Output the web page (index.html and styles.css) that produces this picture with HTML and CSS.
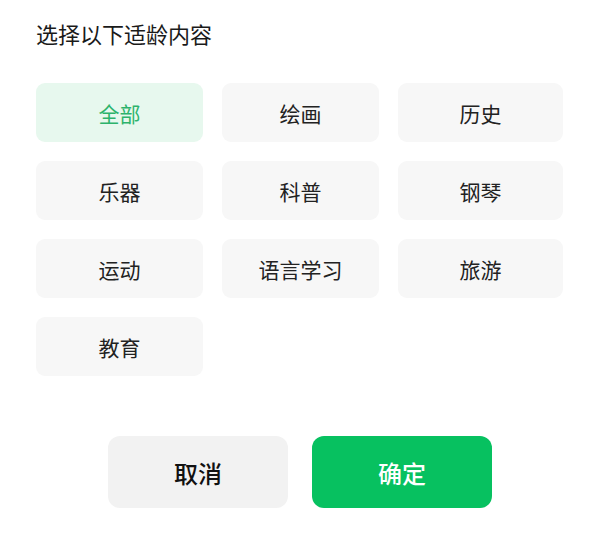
FILE: index.html
```html
<!DOCTYPE html>
<html lang="zh">
<head>
<meta charset="utf-8">
<link rel="stylesheet" href="styles.css">
</head>
<body>
<div class="sheet">
  <h1 class="title">选择以下适龄内容</h1>
  <div class="grid">
    <div class="tile selected">全部</div>
    <div class="tile">绘画</div>
    <div class="tile">历史</div>
    <div class="tile">乐器</div>
    <div class="tile">科普</div>
    <div class="tile">钢琴</div>
    <div class="tile">运动</div>
    <div class="tile">语言学习</div>
    <div class="tile">旅游</div>
    <div class="tile">教育</div>
  </div>
  <div class="actions">
    <button class="btn cancel">取消</button>
    <button class="btn confirm">确定</button>
  </div>
</div>
</body>
</html>
```
FILE: styles.css
```css
html, body {
  margin: 0;
  padding: 0;
  background: #ffffff;
}
body {
  font-family: "Noto Sans CJK SC", "Noto Sans", sans-serif;
  color: #1f1f1f;
}
.sheet {
  width: 600px;
  height: 541px;
  padding: 17px 37px 0 36px;
  box-sizing: border-box;
}
.title {
  margin: 0;
  font-size: 22px;
  font-weight: 400;
  line-height: 32px;
  color: #1a1a1a;
}
.grid {
  margin-top: 34px;
  display: grid;
  grid-template-columns: 167px 157px 165px;
  grid-auto-rows: 59px;
  column-gap: 19px;
  row-gap: 19px;
}
.tile {
  background: #f7f7f7;
  border-radius: 9px;
  display: flex;
  align-items: center;
  justify-content: center;
  font-size: 21px;
  color: #222222;
}
.tile.selected {
  background: #e7f8ee;
  color: #2db36c;
}
.actions {
  margin-top: 60px;
  display: flex;
  justify-content: center;
  gap: 24px;
  padding-left: 1px;
}
.btn {
  width: 180px;
  height: 72px;
  border: none;
  border-radius: 12px;
  font-family: "Noto Sans CJK SC", "Noto Sans", sans-serif;
  font-size: 24px;
  font-weight: 500;
  cursor: pointer;
}
.cancel {
  background: #f2f2f2;
  color: #111111;
}
.confirm {
  background: #07c160;
  color: #ffffff;
}
```
